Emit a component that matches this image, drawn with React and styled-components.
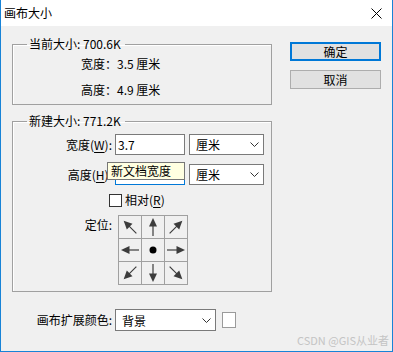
import React from 'react';
import styled, {createGlobalStyle} from 'styled-components';

const GlobalStyle = createGlobalStyle`
  html, body {
    margin: 0;
    padding: 0;
    background: #fff;
  }
  body {
    font-family: "Noto Sans CJK SC", "Microsoft YaHei", sans-serif;
    font-size: 12px;
    color: #000;
  }
`;

const Window = styled.div`
  position: relative;
  width: 393px;
  height: 352px;
  box-sizing: border-box;
  border: 1px solid #1883d7;
  border-top: none;
  background: #f0f0f0;
  display: flex;
  flex-direction: column;
`;

const TitleBar = styled.div`
  height: 26px;
  flex-shrink: 0;
  background: #fff;
  display: flex;
  align-items: center;
  justify-content: space-between;
  padding: 0 10px 0 3px;
  line-height: 16px;
`;

const Body = styled.div`
  display: flex;
  padding: 10px 0 0 11px;
`;

const LeftCol = styled.div`
  width: 260px;
  display: flex;
  flex-direction: column;
`;

const RightCol = styled.div`
  margin-left: 18px;
  margin-top: 6px;
  display: flex;
  flex-direction: column;
  gap: 9px;
`;

const Group = styled.fieldset`
  margin: ${p => p.$first ? '0' : '8px 0 0'};
  padding: ${p => p.$pad};
  border: 1px solid #a0a0a0;
  box-shadow: inset 1px 1px 0 #fff;
  min-width: 0;
`;

const Legend = styled.legend`
  margin-left: 14px;
  padding: 0 4px 0 2px;
  line-height: 16px;
`;

const InfoList = styled.div`
  display: flex;
  flex-direction: column;
  gap: 10px;
  padding-left: 68px;
  line-height: 16px;
`;

const Row = styled.div`
  position: relative;
  display: flex;
  align-items: ${p => p.$top ? 'flex-start' : 'center'};
  margin-top: ${p => p.$gap || 0}px;
`;

const Label = styled.div`
  width: ${p => p.$w || 99}px;
  text-align: right;
  margin-right: ${p => p.$mr || 3}px;
  line-height: 16px;
  padding-top: ${p => p.$pt || 0}px;
  white-space: nowrap;
`;

const Key = styled.u`
  text-decoration: underline;
  text-underline-offset: 2px;
`;

const TextInput = styled.div`
  width: 70px;
  height: 21px;
  box-sizing: border-box;
  background: #fff;
  border: 1px solid ${p => p.$focus ? '#0078d7' : '#7a7a7a'};
  padding-left: 2px;
  line-height: 19px;
`;

const Select = styled.div`
  width: ${p => p.$w}px;
  height: ${p => p.$h || 21}px;
  margin-left: ${p => p.$ml ?? 4}px;
  box-sizing: border-box;
  background: #fff;
  border: 1px solid #7a7a7a;
  display: flex;
  align-items: center;
  justify-content: space-between;
  padding: 0 4px 0 6px;
`;

const Tooltip = styled.div`
  position: absolute;
  left: 94px;
  top: -2px;
  width: 78px;
  height: 18px;
  box-sizing: border-box;
  background: #ffffe1;
  border: 1px solid #767676;
  padding-left: 3px;
  line-height: 16px;
`;

const CheckBox = styled.div`
  width: 13px;
  height: 13px;
  box-sizing: border-box;
  background: #fff;
  border: 1px solid #333;
  margin-right: 3px;
`;

const CheckRow = styled.div`
  display: flex;
  align-items: center;
  height: 16px;
  margin-top: 7px;
  padding-left: 96px;
  line-height: 16px;
`;

const AnchorGrid = styled.div`
  display: grid;
  grid-template-columns: repeat(3, 22px);
  grid-template-rows: repeat(3, 22px);
  gap: 1px;
  padding: 1px;
  background: #a0a0a0;
  margin-left: 4px;
`;

const Cell = styled.div`
  background: #f0f0f0;
  display: flex;
  align-items: center;
  justify-content: center;
`;

const Button = styled.div`
  width: 91px;
  height: 19px;
  box-sizing: border-box;
  background: #e1e1e1;
  border: ${p => p.$primary ? '2px solid #0078d7' : '1px solid #adadad'};
  display: flex;
  align-items: center;
  justify-content: center;
  line-height: 16px;
`;

const BottomRow = styled.div`
  display: flex;
  align-items: center;
  margin-top: 17px;
`;

const Swatch = styled.div`
  width: 14px;
  height: 16px;
  box-sizing: border-box;
  margin-left: 6px;
  background: #fff;
  border: 1px solid #9a9a9a;
`;

const Watermark = styled.div`
  position: absolute;
  right: 3px;
  bottom: 4px;
  font-size: 11px;
  line-height: 14px;
  color: #c4c4c4;
`;

const Chevron = () => (
  <svg width="9" height="5" viewBox="0 0 9 5">
    <polyline points="0.5,0.5 4.5,4.5 8.5,0.5" fill="none" stroke="#333" strokeWidth="1" />
  </svg>
);

const CloseIcon = () => (
  <svg width="11" height="11" viewBox="0 0 11 11">
    <path d="M0.5 0.5 L10.5 10.5 M10.5 0.5 L0.5 10.5" stroke="#000" strokeWidth="1" />
  </svg>
);

const Arrow = ({angle}) => (
  <svg width="22" height="22" viewBox="0 0 22 22">
    <g transform={`rotate(${angle} 11 11)`}>
      <line x1="11" y1="20" x2="11" y2="9" stroke="#3c3c3c" strokeWidth="1.2" />
      <polygon points="11,2 15,10.5 7,10.5" fill="#3c3c3c" />
    </g>
  </svg>
);

const Dot = () => (
  <svg width="22" height="22" viewBox="0 0 22 22">
    <circle cx="11" cy="11" r="3.5" fill="#000" />
  </svg>
);

const anchors = [-45, 0, 45, -90, null, 90, -135, 180, 135];

function App() {
  return (
    <>
      <GlobalStyle />
      <Window>
        <TitleBar>
          <span>画布大小</span>
          <CloseIcon />
        </TitleBar>
        <Body>
          <LeftCol>
            <Group $first $pad="4px 0 6px 0">
              <Legend>当前大小: 700.6K</Legend>
              <InfoList>
                <div>宽度：3.5 厘米</div>
                <div>高度：4.9 厘米</div>
              </InfoList>
            </Group>

            <Group $pad="5px 0 6px 0">
              <Legend>新建大小: 771.2K</Legend>
              <Row>
                <Label>宽度(<Key>W</Key>):</Label>
                <TextInput>3.7</TextInput>
                <Select $w={75}>厘米<Chevron /></Select>
              </Row>
              <Row $gap={9}>
                <Label>高度(<Key>H</Key>):</Label>
                <TextInput $focus />
                <Select $w={75}>厘米<Chevron /></Select>
                <Tooltip>新文档宽度</Tooltip>
              </Row>
              <CheckRow>
                <CheckBox />
                <span>相对(<Key>R</Key>)</span>
              </CheckRow>
              <Row $top $gap={7}>
                <Label $pt={2} $mr={2}>定位:</Label>
                <AnchorGrid>
                  {anchors.map((a, i) => (
                    <Cell key={i}>{a === null ? <Dot /> : <Arrow angle={a} />}</Cell>
                  ))}
                </AnchorGrid>
              </Row>
            </Group>

            <BottomRow>
              <Label $w={100}>画布扩展颜色:</Label>
              <Select $w={101} $h={22} $ml={0}>背景<Chevron /></Select>
              <Swatch />
            </BottomRow>
          </LeftCol>

          <RightCol>
            <Button $primary>确定</Button>
            <Button>取消</Button>
          </RightCol>
        </Body>
        <Watermark>CSDN @GIS从业者</Watermark>
      </Window>
    </>
  );
}

export default App;
